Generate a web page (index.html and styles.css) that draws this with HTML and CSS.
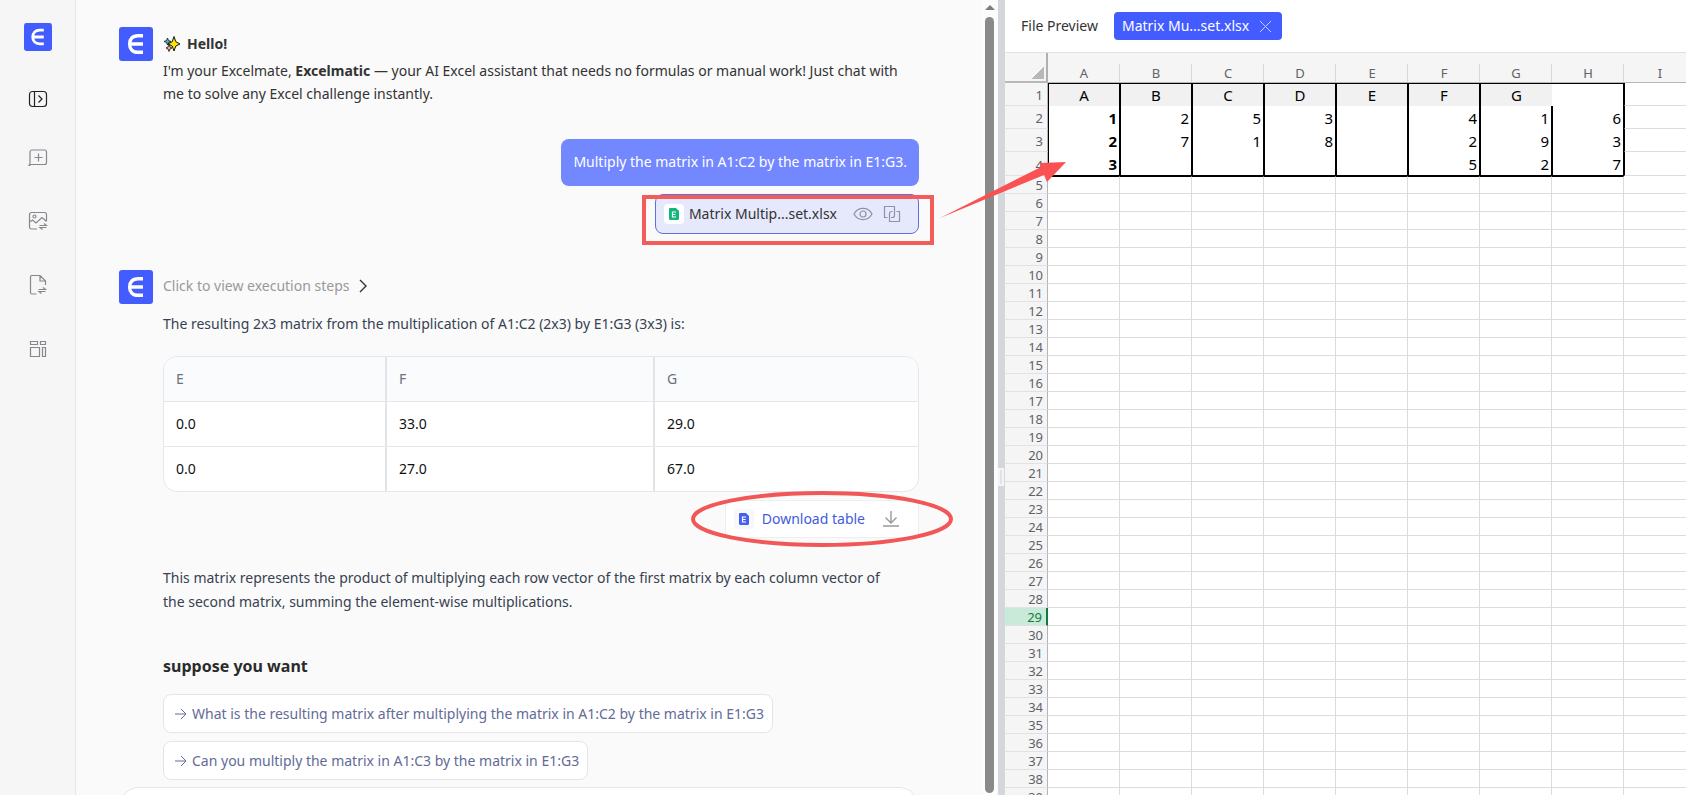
FILE: index.html
```html
<!DOCTYPE html>
<html lang="en">

<head>
  <meta charset="UTF-8">
  <title>Excelmatic</title>
  <link rel="stylesheet" href="styles.css">
</head>
<body>

<!-- shared shapes -->
<svg class="sprite" aria-hidden="true">
  <symbol id="logo" viewBox="0 0 34 34">
    <rect width="34" height="34" rx="3" fill="#425cff"/>
    <path d="M24 8.700H19C13.600 8.700 10.600 12.200 10.600 17S13.600 25.300 19 25.300H24M10.600 17H24" fill="none" stroke="#fff" stroke-width="3.400"/>
  </symbol>
  <symbol id="sheet" viewBox="0 0 12 14">
    <path d="M2 1H8L11 4V11.5A1.500 1.500 0 0 1 9.500 13H2.500A1.500 1.500 0 0 1 1 11.500V2A1 1 0 0 1 2 1Z" fill="currentColor"/>
    <path d="M8 5H4.500V10H8M4.500 7.500H7.600" fill="none" stroke="#fff" stroke-width="1.200"/>
  </symbol>
  <symbol id="arrow" viewBox="0 0 12 12">
    <path d="M0 6H11M6 1L11 6L6 11" fill="none" stroke="currentColor"/>
  </symbol>
</svg>

<div class="app">

  <nav class="sidebar">
    <a href="#" class="brand" aria-label="Home"><svg width="28" height="28"><use href="#logo"/></svg></a>
    <button class="dark" aria-label="Expand sidebar">
      <svg width="20" height="20" viewBox="0 0 20 20"><rect x="1.500" y="2.500" width="17" height="15" rx="3"/><path d="M6.500 2.500V17.500M10.500 6.500L14 10L10.500 13.500"/></svg>
    </button>
    <button aria-label="New chat">
      <svg width="20" height="20" viewBox="0 0 20 20"><path d="M.5 18.500C1.500 18 2 17.500 2 16V5A2 2 0 0 1 4 3H16.500A2 2 0 0 1 18.500 5V15.500A2 2 0 0 1 16.500 17.500H3C2 18 1.500 18.500 .5 18.500ZM10.500 6.500V14.500M6.500 10.500H14.500"/></svg>
    </button>
    <button aria-label="Image convert">
      <svg width="20" height="20" viewBox="0 0 20 20"><path d="M9 18H3.500A2 2 0 0 1 1.500 16V3.500A2 2 0 0 1 3.500 1.500H16.500A2 2 0 0 1 18.500 3.500V10M1.500 11L4.500 9L8 12L14 6.500L18.500 10.500M11.500 14.500H18.500L16 12.500M18.500 16.500H12L14.500 18.500"/><circle cx="6.500" cy="5.500" r="1.500"/></svg>
    </button>
    <button aria-label="File convert">
      <svg width="20" height="20" viewBox="0 0 20 20"><path d="M8.500 19H4A1.500 1.500 0 0 1 2.500 17.500V2A1.500 1.500 0 0 1 4 .5H12L17.500 6V10M12 .5V6H17.500M10.500 14.500H17.500L15 12.500M17.500 16.500H11L13.500 18.500"/></svg>
    </button>
    <button aria-label="Templates">
      <svg width="20" height="20" viewBox="0 0 20 20"><path d="M2.500 2.500H9.500V5.500H2.500ZM12.500 2.500H17.500V5.500H12.500ZM2.500 8.500H11.500V17.500H2.500ZM14.500 8.500H17.500V17.500H14.500Z"/></svg>
    </button>
  </nav>

  <main class="chat">
    <div class="messages">

      <section class="message">
        <svg class="avatar" width="34" height="34"><use href="#logo"/></svg>
        <div class="body">
          <p class="hello">
            <svg width="18" height="18" viewBox="0 0 18 18"><path d="M4.500 3L5.500 5.500L8 6.500L5.500 7.500L4.500 10L3.500 7.500L1 6.500L3.500 5.500Z" fill="#3fb4d8" stroke="#111" stroke-width=".8"/><path d="M6 9.500L7 12L9 13L7 14L6 16.500L5 14L3 13L5 12Z" fill="#f0a8a0" stroke="#111" stroke-width=".8"/><path d="M11 1.500L12.800 6.700L17 9L12.800 11L11 16L9.200 11L5 9L9.200 6.700Z" fill="#ffe500" stroke="#111"/></svg>
            <strong>Hello!</strong>
          </p>
          <p class="intro">I'm your Excelmate, <strong>Excelmatic</strong> — your AI Excel assistant that needs no formulas or manual work! Just chat with me to solve any Excel challenge instantly.</p>
        </div>
      </section>

      <section class="request">
        <p class="bubble">Multiply the matrix in A1:C2 by the matrix in E1:G3.</p>
        <div class="file">
          <span class="file-icon green"><svg width="12" height="14"><use href="#sheet"/></svg></span>
          <span class="file-name">Matrix Multip...set.xlsx</span>
          <button aria-label="Preview"><svg width="20" height="18" viewBox="0 0 20 18"><path d="M1 9C5 1.500 15 1.500 19 9C15 16.500 5 16.500 1 9Z"/><circle cx="10" cy="9" r="3"/></svg></button>
          <button aria-label="Copy"><svg width="18" height="18" viewBox="0 0 18 18"><path d="M4.500 12.500H1.500V1.500H11.500V10.500A2 2 0 0 1 9.500 12.500H8M13.500 6.500H16.500V16.500H6.500V8.500A2 2 0 0 1 8.500 6.500H9.500"/></svg></button>
          <div class="mark-box"></div>
        </div>
      </section>

      <section class="message">
        <svg class="avatar" width="34" height="34"><use href="#logo"/></svg>
        <div class="body">
          <button class="steps">Click to view execution steps
            <svg width="8" height="14" viewBox="0 0 8 14"><path d="M1 1L7 7L1 13"/></svg>
          </button>
          <p class="answer">The resulting 2x3 matrix from the multiplication of A1:C2 (2x3) by E1:G3 (3x3) is:</p>

          <table class="result">
            <colgroup><col class="c1"><col class="c2"><col></colgroup>
            <thead>
              <tr><th>E</th><th>F</th><th>G</th></tr>
            </thead>
            <tbody>
              <tr><td>0.0</td><td>33.0</td><td>29.0</td></tr>
              <tr><td>0.0</td><td>27.0</td><td>67.0</td></tr>
            </tbody>
          </table>

          <div class="download-row">
            <button class="download">
              <span class="file-icon blue"><svg width="12" height="14"><use href="#sheet"/></svg></span>
              Download table
              <svg class="down" width="18" height="18" viewBox="0 0 18 18"><path d="M9 1V13M3.500 7.500L9 13L14.500 7.500M1 16H17"/></svg>
            </button>
            <svg class="mark-ellipse" width="262" height="56" viewBox="0 0 262 56"><ellipse cx="131" cy="28" rx="129" ry="26"/></svg>
          </div>

          <p class="answer">This matrix represents the product of multiplying each row vector of the first matrix by each column vector of the second matrix, summing the element-wise multiplications.</p>

          <h2>suppose you want</h2>
          <div class="suggestions">
            <button><svg width="12" height="12"><use href="#arrow"/></svg>What is the resulting matrix after multiplying the matrix in A1:C2 by the matrix in E1:G3</button>
            <button><svg width="12" height="12"><use href="#arrow"/></svg>Can you multiply the matrix in A1:C3 by the matrix in E1:G3</button>
          </div>
        </div>
      </section>

      <textarea class="prompt" aria-label="Message"></textarea>
    </div>

    <div class="scrollbar">
      <svg width="10" height="5" viewBox="0 0 10 5"><path d="M5 0L10 5H0Z" fill="#7d7d7d"/></svg>
      <div class="thumb"></div>
    </div>
    <svg class="mark-arrow" width="128" height="60" viewBox="0 0 128 60"><path d="M1 58L102 7L101 3L127 2L108 22L105 15Z" fill="#fa5252"/></svg>
  </main>

  <div class="divider"><span></span></div>

  <aside class="preview">
    <header>
      <span>File Preview</span>
      <button class="tab">Matrix Mu...set.xlsx
        <svg width="13" height="13" viewBox="0 0 13 13"><path d="M1 1L12 12M12 1L1 12"/></svg>
      </button>
    </header>
    <div class="grid-wrap">
      <table class="grid">
        <thead><tr id="gridHead"></tr></thead>
        <tbody id="gridBody"></tbody>
      </table>
    </div>
  </aside>

</div>

<script>
  const columns = "ABCDEFGHIJKLMNOP".split("");
  const selectedRow = 29;
  const sheet = [
    ["A", "B", "C", "D", "E", "F", "G", ""],
    [1, 2, 5, 3, "", 4, 1, 6],
    [2, 7, 1, 8, "", 2, 9, 3],
    [3, "", "", "", "", 5, 2, 7]
  ];

  document.getElementById("gridHead").innerHTML =
    '<th class="corner"></th>' + columns.map(c => `<th>${c}</th>`).join("");

  let rows = "";
  for (let r = 1; r <= 80; r++) {
    const data = sheet[r - 1];
    const cells = columns.map((c, i) => {
      const value = data && i < data.length ? data[i] : "";
      return `<td>${value}</td>`;
    }).join("");
    const name = r === selectedRow ? "selected" : data ? "data" : "";
    rows += `<tr class="${name}"><th>${r}</th>${cells}</tr>`;
  }
  document.getElementById("gridBody").innerHTML = rows;
</script>

</body>
</html>
```
FILE: styles.css
```css
* {
  box-sizing: border-box;
}

body {
  margin: 0;
  font-family: "Noto Sans", "Open Sans", sans-serif;
  font-size: 14px;
  line-height: 24px;
  color: #333;
  background: #fafafa;
}

p, h2 {
  margin: 0;
}

button {
  font: inherit;
  color: inherit;
  border: none;
  background: none;
  padding: 0;
  cursor: pointer;
}

svg {
  display: block;
  flex-shrink: 0;
}

.sprite {
  position: absolute;
  width: 0;
  height: 0;
}

.app {
  display: flex;
  height: 100vh;
  overflow: hidden;
}

/* Sidebar */
.sidebar {
  width: 76px;
  flex-shrink: 0;
  display: flex;
  flex-direction: column;
  align-items: center;
  gap: 44px;
  padding-top: 23px;
  background: #f6f6f6;
  border-right: 1px solid #e6e6e6;
}

.sidebar .brand {
  margin-bottom: -6px;
}

.sidebar button svg {
  fill: none;
  stroke: #85888d;
  stroke-width: 1.2;
}

.sidebar .dark svg {
  stroke: #222;
}

.sidebar .dark {
  margin-bottom: -6px;
}

/* Chat */
.chat {
  position: relative;
  flex: 921;
  min-width: 0;
  display: flex;
}

.messages {
  flex: 1;
  min-width: 0;
  padding: 27px 63px 0 43px;
  overflow: hidden;
}

.message {
  display: flex;
  gap: 10px;
}

.message .body {
  flex: 1;
  min-width: 0;
}

.avatar {
  flex-shrink: 0;
}

.hello {
  display: flex;
  align-items: center;
  gap: 6px;
  padding-top: 5px;
}

.hello, .intro {
  line-height: 23px;
}

.intro {
  padding: 4px 20px 0 0;
}

.request {
  display: flex;
  flex-direction: column;
  align-items: flex-end;
  gap: 8px;
  margin: 34px 0 36px;
}

.bubble {
  padding: 11px 12px 12px;
  border-radius: 8px;
  background: #7388ff;
  color: #fff;
}

.file {
  position: relative;
  display: flex;
  align-items: center;
  height: 40px;
  padding: 0 17px 0 8px;
  border: 1px solid #5b72dd;
  border-radius: 8px;
  background: #e6e8fc;
}

.file-icon {
  display: flex;
  align-items: center;
  justify-content: center;
  width: 20px;
  height: 20px;
  border-radius: 4px;
}

.green {
  color: #13b67a;
  background: #fff;
}

.blue {
  color: #4560ee;
  background: #f7f8fc;
}

.file-name {
  margin: 0 16px 0 5px;
}

.file button + button {
  margin-left: 10px;
}

.file button svg {
  fill: none;
  stroke: #8d93a8;
  stroke-width: 1.2;
}

/* Red marks */
.mark-box {
  position: absolute;
  inset: 0 -16px -12px -14px;
  border: 4px solid #f45b5b;
}

.mark-arrow {
  position: absolute;
  right: -70px;
  top: 160px;
  z-index: 2;
}

.mark-ellipse {
  position: absolute;
  right: -34px;
  top: -9px;
  fill: none;
  stroke: #f25757;
  stroke-width: 4;
}

.steps {
  display: flex;
  align-items: center;
  gap: 10px;
  padding-top: 4px;
  color: #999;
}

.steps svg {
  fill: none;
  stroke: #333;
  stroke-width: 1.4;
}

.answer {
  padding-right: 20px;
  color: #374151;
}

.steps + .answer {
  padding-top: 14px;
}

/* Result table */
.result {
  width: 100%;
  margin: 20px 0 8px;
  table-layout: fixed;
  border-collapse: separate;
  border-spacing: 0;
  border: 1px solid #e5e7eb;
  border-radius: 14px;
  overflow: hidden;
  background: #fff;
  color: #111;
}

.result .c1 {
  width: 223px;
}

.result .c2 {
  width: 268px;
}

.result th, .result td {
  height: 45px;
  padding: 0 12px;
  text-align: left;
  font-weight: normal;
  border-right: 2px solid #e1e4e8;
  border-bottom: 1px solid #e5e7eb;
}

.result th {
  background: #f9fbfd;
  color: #6b7280;
}

.result th:last-child, .result td:last-child {
  border-right: none;
}

.result tr:last-child td {
  height: 44px;
  border-bottom: none;
}

.download-row {
  position: relative;
  display: flex;
  justify-content: flex-end;
  margin-bottom: 28px;
}

.download {
  display: flex;
  align-items: center;
  gap: 8px;
  height: 38px;
  padding: 0 18px 0 8px;
  border: 1px solid #eee;
  border-radius: 6px;
  background: #fff;
  color: #425cdc;
}

.down {
  margin-left: 9px;
  fill: none;
  stroke: #999;
  stroke-width: 1.4;
}

h2 {
  margin-top: 40px;
  font-size: 16px;
  line-height: 24px;
  color: #2b2b2b;
}

.suggestions {
  display: flex;
  flex-direction: column;
  align-items: flex-start;
  gap: 8px;
  margin: 16px 0 7px;
}

.suggestions button {
  display: flex;
  align-items: center;
  gap: 5px;
  height: 39px;
  padding: 0 8px 0 11px;
  border: 1px solid #e5e5e5;
  border-radius: 8px;
  background: #fff;
  color: #636b96;
}

.prompt {
  display: block;
  width: 100%;
  height: 100px;
  border: 1px solid #e5e5e5;
  border-radius: 20px;
  background: #fff;
  resize: none;
}

.scrollbar {
  width: 15px;
  display: flex;
  flex-direction: column;
  align-items: center;
  gap: 7px;
  padding: 5px 0 2px;
  background: #fcfcfc;
}

.thumb {
  flex: 1;
  width: 9px;
  border-radius: 5px;
  background: #8a8a8a;
}

.divider {
  width: 7px;
  flex-shrink: 0;
  display: flex;
  align-items: center;
  margin-left: 1px;
  background: #d3d6da;
}

.divider span {
  width: 6px;
  height: 18px;
  margin-top: 158px;
  border: 2px solid #f4f4f4;
  background: #e0e2e5;
}

/* File preview */
.preview {
  flex: 681;
  min-width: 0;
  display: flex;
  flex-direction: column;
  background: #fff;
}

.preview header {
  display: flex;
  align-items: center;
  gap: 16px;
  height: 53px;
  flex-shrink: 0;
  padding: 0 16px;
  border-bottom: 1px solid #e2e2e2;
}

.tab {
  display: flex;
  align-items: center;
  gap: 10px;
  height: 28px;
  padding: 0 10px 0 8px;
  border-radius: 4px;
  background: #425cff;
  color: #fff;
}

.tab svg {
  fill: none;
  stroke: #c3cbff;
}

.grid-wrap {
  flex: 1;
  min-height: 0;
  overflow: hidden;
}

.grid {
  width: 1195px;
  table-layout: fixed;
  border-collapse: separate;
  border-spacing: 0;
  font-size: 13px;
  line-height: 17px;
}

.grid th {
  padding: 0;
  font-weight: normal;
  color: #5f6368;
  background: #f5f5f5;
}

.grid thead th {
  width: 72px;
  height: 30px;
  vertical-align: bottom;
  border-bottom: 1px solid #b8b8b8;
  background: linear-gradient(#d8d8d8, #d8d8d8) right bottom / 1px 18px no-repeat #f5f5f5;
}

.grid thead .corner {
  width: 43px;
  border-right: 2px solid #b0b0b0;
  border-bottom: 2px solid #b8b8b8;
  background: linear-gradient(135deg, transparent 50%, #b8b8b8 50%) right 2px bottom 2px / 12px 12px no-repeat #f5f5f5;
}

.grid tbody th {
  padding: 2px 4px 0 0;
  line-height: 15px;
  text-align: right;
  border-right: 1px solid #b5b5b5;
  border-bottom: 1px solid #e2e2e2;
}

.grid td {
  height: 18px;
  padding: 0 2px;
  text-align: right;
  border-right: 1px solid #dcdcdc;
  border-bottom: 1px solid #dcdcdc;
}

.grid .selected th {
  color: #0f7b43;
  background: #c9ead8;
  border-right: 2px solid #0f7b43;
}

/* Filled cells */
.grid .data td {
  height: 23px;
}

.grid .data:nth-child(4) td {
  height: 24px;
}

.grid .data th {
  vertical-align: bottom;
  line-height: 19px;
}

.grid .data td:nth-child(-n+9) {
  vertical-align: bottom;
  font-size: 15px;
  line-height: 22px;
  color: #000;
  border-left: 1px solid #000;
  border-right: 1px solid #000;
  border-bottom: none;
}

.grid .data td:nth-child(10) {
  border-left: 1px solid #000;
}

.grid .data td:nth-child(2) {
  font-weight: bold;
}

.grid .data:first-child td:nth-child(-n+9) {
  text-align: center;
  font-weight: normal;
  border-top: 1px solid #000;
}

.grid .data:first-child td:nth-child(-n+8) {
  background: #f1f1f1;
}

.grid .data:first-child td:nth-child(8) {
  border-right: none;
}

.grid .data:first-child td:nth-child(9) {
  border-left: none;
}

.grid .data:nth-child(4) td:nth-child(-n+9) {
  border-bottom: 1px solid #000;
}

.grid tr:nth-child(5) td:nth-child(-n+9) {
  border-top: 1px solid #000;
}
```
